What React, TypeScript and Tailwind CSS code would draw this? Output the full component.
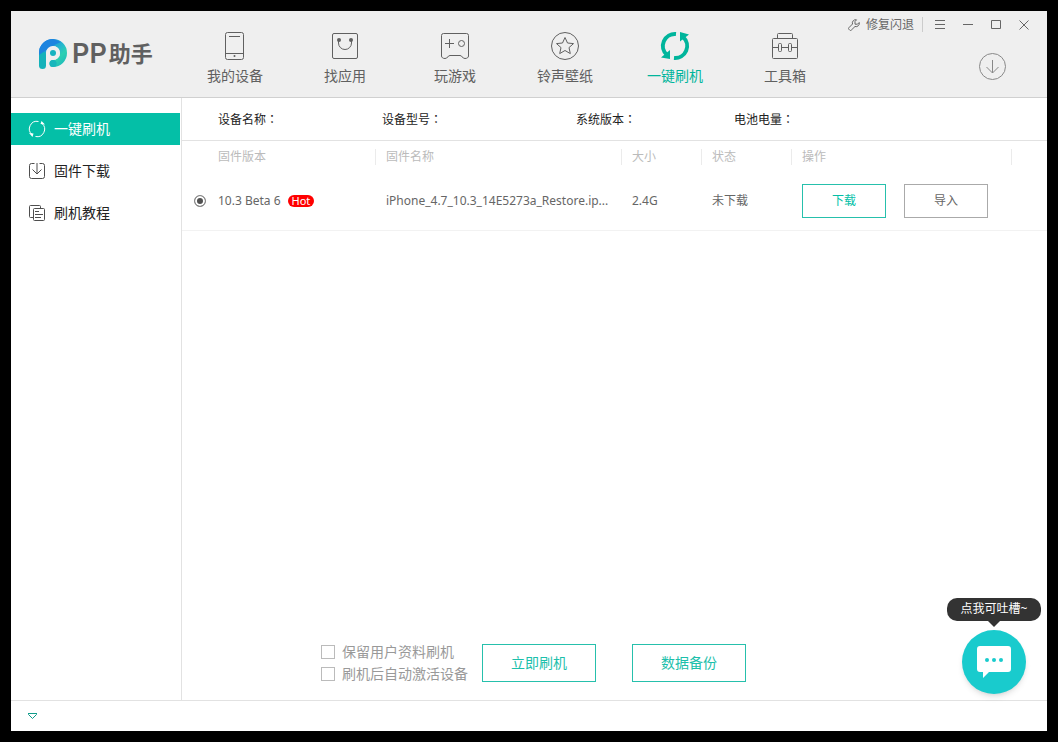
import React, { useState } from 'react';

const PhoneIcon = () => (
  <svg width="30" height="30" viewBox="0 0 30 30" fill="none" stroke="currentColor">
    <rect x="5.5" y="1.5" width="18" height="27" rx="2" />
    <path d="M9 5.5h11M5.5 22.5h18" />
    <circle cx="14.5" cy="25" r="1" fill="currentColor" stroke="none" />
  </svg>
);

const AppIcon = () => (
  <svg width="30" height="30" viewBox="0 0 30 30" fill="none" stroke="currentColor">
    <rect x="2.5" y="2.5" width="25" height="25" rx="1.5" />
    <path d="M8.5 9v3a6.5 6.5 0 0 0 13 0V9" />
    <circle cx="9" cy="9" r="2" fill="currentColor" stroke="none" />
    <circle cx="21" cy="9" r="2" fill="currentColor" stroke="none" />
  </svg>
);

const GameIcon = () => (
  <svg width="30" height="30" viewBox="0 0 30 30" fill="none" stroke="currentColor">
    <path d="M1.5 4.5a2 2 0 0 1 2-2h23a2 2 0 0 1 2 2V25c0 1.5-1.5 2.5-3.5 2.5-3 0-2.5-3-5-3H10c-2.5 0-2 3-5 3-2 0-3.5-1-3.5-2.5z" />
    <path d="M5 12.5h9M9.5 8v9" />
    <circle cx="21.5" cy="12.5" r="3" />
  </svg>
);

const StarIcon = () => (
  <svg width="30" height="30" viewBox="0 0 30 30" fill="none" stroke="currentColor">
    <circle cx="15" cy="15" r="13.5" />
    <path d="M15 6.5l2.5 5.5 6 .6-4.500 4 1.300 6-5.300-3.100-5.300 3.100 1.300-6-4.500-4 6-.6z" />
  </svg>
);

const FlashIcon = () => (
  <svg width="30" height="30" viewBox="0 0 30 30" fill="none">
    <path d="M16 3A12 12 0 0 0 7 24M14 27A12 12 0 0 0 23 6" stroke="currentColor" strokeWidth="4" />
    <path d="M1 26.5L10 19V28zM29 3.5L20 1V10.5z" fill="currentColor" />
  </svg>
);

const ToolboxIcon = () => (
  <svg width="30" height="30" viewBox="0 0 30 30" fill="none" stroke="currentColor">
    <rect x="2.5" y="7.5" width="25" height="20" rx="1" />
    <path d="M7.5 7.5v-4a1 1 0 0 1 1-1h13a1 1 0 0 1 1 1v4M2.5 16.5h6M11.5 16.5h7M21.5 16.5h6" />
    <rect x="8.5" y="12.5" width="3" height="8" rx="1" />
    <rect x="18.5" y="12.5" width="3" height="8" rx="1" />
  </svg>
);

const RefreshIcon = () => (
  <svg width="18" height="18" viewBox="0 0 18 18" fill="none">
    <path d="M10.5 1.5A7.5 7.5 0 0 0 4 14.5M7.5 16.5A7.5 7.5 0 0 0 14 3.5" stroke="currentColor" />
    <path d="M1 13l4.500.5L4.500 17zM17 4.500L12.500 4 13.500 1z" fill="currentColor" />
  </svg>
);

const FirmwareIcon = () => (
  <svg width="18" height="18" viewBox="0 0 18 18" fill="none" stroke="currentColor" className="opacity-80">
    <path d="M6.5 1.5h-3a2 2 0 0 0-2 2v11a2 2 0 0 0 2 2h11a2 2 0 0 0 2-2v-11a2 2 0 0 0-2-2h-3M9 1v11M4.500 7.500L9 12l4.500-4.500" />
  </svg>
);

const GuideIcon = () => (
  <svg width="18" height="18" viewBox="0 0 18 18" fill="none" stroke="currentColor" className="opacity-80">
    <path d="M12.5 4V2.500a1 1 0 0 0-1-1h-9a1 1 0 0 0-1 1v10a1 1 0 0 0 1 1H5" />
    <rect x="5.5" y="4.500" width="11" height="12" rx="1" />
    <path d="M7 7.500h4M7 10.500h8M7 13.500h6" />
  </svg>
);

const Logo = () => (
  <svg width="28" height="30" viewBox="0 0 28 30" fill="none">
    <defs>
      <linearGradient id="ring" x1="4" y1="2" x2="26" y2="26" gradientUnits="userSpaceOnUse">
        <stop offset="0" stopColor="#1c7de2" />
        <stop offset="0.5" stopColor="#26b9cd" />
        <stop offset="0.7" stopColor="#2cd0b2" />
        <stop offset="1" stopColor="#1cb8bd" />
      </linearGradient>
    </defs>
    <path d="M3.5 14A10.5 10.5 0 1 1 14 24.5" stroke="url(#ring)" strokeWidth="7" strokeLinecap="round" />
    <path d="M3.5 26.5V16" stroke="#14b2ba" strokeWidth="7" strokeLinecap="round" />
    <path d="M0 14A14 14 0 0 1 14 0L22 3Q16 5 12 8Q6 12 0 16z" fill="#1d84df" />
    <path d="M7 14a7 7 0 0 1 14 0a7 7 0 0 1-7 7l-3.500 0-3.500 5z" fill="#efefef" />
    <path d="M14 24.5h.1" stroke="#18b6bc" strokeWidth="7" strokeLinecap="round" />
    <circle cx="14" cy="14" r="3" fill="#16b3c0" />
  </svg>
);

const navItems = [
  { label: '我的设备', icon: PhoneIcon },
  { label: '找应用', icon: AppIcon },
  { label: '玩游戏', icon: GameIcon },
  { label: '铃声壁纸', icon: StarIcon },
  { label: '一键刷机', icon: FlashIcon },
  { label: '工具箱', icon: ToolboxIcon },
];

const sideItems = [
  { label: '一键刷机', icon: RefreshIcon },
  { label: '固件下载', icon: FirmwareIcon },
  { label: '刷机教程', icon: GuideIcon },
];

const deviceInfo = ['设备名称', '设备型号', '系统版本', '电池电量'];

const App = () => {
  const [tab, setTab] = useState('一键刷机');
  const [side, setSide] = useState('一键刷机');

  return (
    <div className="min-h-screen bg-black p-[11px] flex font-['Noto_Sans','Noto_Sans_CJK_SC',sans-serif] text-xs text-[#666]">
      <div className="relative flex-1 min-w-0 flex flex-col bg-white">
        {/* Header */}
        <header className="h-[87px] shrink-0 flex bg-[#efefef] border-b border-[#d0d0d0]">
          <div className="w-[169px] shrink-0 flex items-center gap-[5px] pl-7">
            <Logo />
            <div className="flex items-start gap-0.5 font-semibold text-[#606060]">
              <span className="font-['Inter',sans-serif] text-[27px] leading-8">PP</span>
              <span className="font-['Noto_Sans_CJK_SC',sans-serif] text-[22px] leading-7">助手</span>
            </div>
          </div>

          <nav className="flex">
            {navItems.map(({ label, icon: Icon }) => (
              <button
                key={label}
                onClick={() => setTab(label)}
                className={`w-[110px] pt-5 flex flex-col items-center gap-[5px] text-sm ${
                  tab === label ? 'text-[#00b59c]' : 'text-[#606060]'
                }`}
              >
                <Icon />
                {label}
              </button>
            ))}
          </nav>

          <div className="ml-auto flex flex-col items-end gap-[15px]">
            <div className="h-[27px] flex items-center pr-[9px]">
              <button className="flex items-center gap-1.5 pr-2">
                <svg width="12" height="12" viewBox="0 0 12 12" fill="none" stroke="currentColor">
                  <path d="M8.500.8a3.300 3.300 0 0 0-4 4.200L.8 8.800a1 1 0 0 0 0 1.400l1 1a1 1 0 0 0 1.400 0L7 7.500a3.300 3.300 0 0 0 4.200-4L9.500 5.200H7V2.500z" />
                </svg>
                修复闪退
              </button>
              <span className="w-px h-[15px] bg-[#ccc]" />
              <button aria-label="菜单" className="w-7 ml-[3px] flex justify-center">
                <svg width="10" height="10" viewBox="0 0 10 10" stroke="currentColor"><path d="M0 .5h10M0 4.500h10M0 8.500h10" /></svg>
              </button>
              <button aria-label="最小化" className="w-7 flex justify-center">
                <svg width="10" height="10" viewBox="0 0 10 10" stroke="currentColor"><path d="M0 4.500h10" /></svg>
              </button>
              <button aria-label="最大化" className="w-7 flex justify-center">
                <svg width="10" height="10" viewBox="0 0 10 10" fill="none" stroke="currentColor"><path d="M.5.5h9v8h-9z" /></svg>
              </button>
              <button aria-label="关闭" className="w-7 flex justify-center">
                <svg width="10" height="10" viewBox="0 0 10 10" stroke="currentColor"><path d="M.5.5l9 9M9.500.5l-9 9" /></svg>
              </button>
            </div>
            <button aria-label="下载管理" className="mr-10 text-[#888]">
              <svg width="28" height="28" viewBox="0 0 28 28" fill="none" stroke="currentColor">
                <circle cx="13.5" cy="13.5" r="13" />
                <path d="M13.5 7v13M7.5 14l6 6 6-6" />
              </svg>
            </button>
          </div>
        </header>

        <div className="flex-1 flex">
          {/* Sidebar */}
          <aside className="w-[171px] shrink-0 pt-[15px] pr-px flex flex-col gap-2.5 border-r border-[#e2e2e2]">
            {sideItems.map(({ label, icon: Icon }) => (
              <button
                key={label}
                onClick={() => setSide(label)}
                className={`h-8 pl-[17px] flex items-center gap-2 text-sm ${
                  side === label ? 'bg-[#04bfa7] text-white' : 'text-[#222]'
                }`}
              >
                <Icon />
                {label}
              </button>
            ))}
          </aside>

          <main className="flex-1 min-w-0 flex flex-col">
            {/* Device info */}
            <div className="h-[43px] pl-9 grid grid-cols-[164fr_194fr_158fr_313fr] items-center border-b border-[#e2e2e2] text-[#222]">
              {deviceInfo.map((label) => (
                <div key={label}>
                  {label}
                  <span className="font-['Noto_Sans_CJK_TC',sans-serif]">：</span>
                </div>
              ))}
            </div>

            {/* Firmware table */}
            <table className="w-full table-fixed text-left">
              <colgroup>
                <col className="w-9" />
                <col className="w-[158px]" />
                <col />
                <col className="w-20" />
                <col className="w-[90px]" />
                <col className="w-[220px]" />
                <col className="w-[35px]" />
              </colgroup>
              <thead>
                <tr className="h-[31px] text-[#bbb]">
                  <th />
                  <th className="p-0 font-normal"><div className="border-r border-[#ebebeb]">固件版本</div></th>
                  <th className="p-0 font-normal"><div className="pl-2.5 border-r border-[#ebebeb]">固件名称</div></th>
                  <th className="p-0 font-normal"><div className="pl-2.5 border-r border-[#ebebeb]">大小</div></th>
                  <th className="p-0 font-normal"><div className="pl-2.5 border-r border-[#ebebeb]">状态</div></th>
                  <th className="p-0 font-normal"><div className="pl-2.5 border-r border-[#ebebeb]">操作</div></th>
                  <th />
                </tr>
              </thead>
              <tbody>
                <tr className="h-[58px] border-b border-[#f2f2f2]">
                  <td className="pl-3">
                    <input
                      type="radio"
                      name="firmware"
                      id="firmware-1"
                      defaultChecked
                      className="block appearance-none size-3 rounded-full border border-[#888] bg-white checked:bg-[#505050] checked:shadow-[inset_0_0_0_2px_#fff]"
                    />
                  </td>
                  <td>
                    <label htmlFor="firmware-1" className="flex items-center gap-[7px]">
                      10.3 Beta 6
                      <span className="h-3 px-1 rounded-full bg-[#f00] text-white text-[11px] leading-3">Hot</span>
                    </label>
                  </td>
                  <td className="pl-2.5 whitespace-nowrap">iPhone_4.7_10.3_14E5273a_Restore.ip...</td>
                  <td className="pl-2.5">2.4G</td>
                  <td className="pl-2.5">未下载</td>
                  <td className="pl-2.5">
                    <div className="flex gap-[18px]">
                      <button className="w-[84px] h-[34px] border border-[#26c0ac] text-[#04bfa7]">下载</button>
                      <button className="w-[84px] h-[34px] border border-[#aaa]">导入</button>
                    </div>
                  </td>
                  <td />
                </tr>
              </tbody>
            </table>

            {/* Flash options */}
            <div className="mt-auto pb-[15px] pl-[139px] flex items-center text-sm">
              <div className="flex flex-col text-[#999]">
                {['保留用户资料刷机', '刷机后自动激活设备'].map((label) => (
                  <label key={label} className="h-[22px] flex items-center gap-[7px]">
                    <input type="checkbox" className="appearance-none size-3.5 border border-[#bbb] bg-white checked:bg-[#04bfa7]" />
                    {label}
                  </label>
                ))}
              </div>
              <button className="w-[114px] h-[38px] ml-3.5 border border-[#26c0ac] text-[#1cc0ab]">立即刷机</button>
              <button className="w-[114px] h-[38px] ml-9 border border-[#26c0ac] text-[#1cc0ab]">数据备份</button>
            </div>
          </main>
        </div>

        {/* Status bar */}
        <footer className="h-[31px] shrink-0 flex items-center pl-[17px] border-t border-[#e2e2e2]">
          <button aria-label="展开" className="text-[#109c8a]">
            <svg width="9" height="6" viewBox="0 0 9 6" fill="none" stroke="currentColor"><path d="M0 .5h9M.5.5v1l4 4 4-4v-1" /></svg>
          </button>
        </footer>

        {/* Feedback bubble */}
        <div className="absolute right-1.5 bottom-[37px] w-[94px] flex flex-col items-center">
          <div className="w-full h-[23px] rounded-[10px] bg-[#333] text-white text-center leading-[22px]">点我可吐槽~</div>
          <svg width="12" height="6" viewBox="0 0 12 6" className="mb-[3px] text-[#333]" fill="currentColor"><path d="M0 0h12L6 6z" /></svg>
          <button aria-label="反馈" className="size-16 rounded-full bg-[#19cbcd] shadow-md flex items-center justify-center">
            <svg width="34" height="32" viewBox="0 0 34 32" fill="none">
              <path d="M3 0h28a3 3 0 0 1 3 3v20a3 3 0 0 1-3 3H12l-6 6v-6H3a3 3 0 0 1-3-3V3a3 3 0 0 1 3-3z" fill="#fff" />
              <circle cx="10" cy="14" r="2" fill="#19cbcd" />
              <circle cx="17" cy="14" r="2" fill="#19cbcd" />
              <circle cx="24" cy="14" r="2" fill="#19cbcd" />
            </svg>
          </button>
        </div>
      </div>
    </div>
  );
};

export default App;
